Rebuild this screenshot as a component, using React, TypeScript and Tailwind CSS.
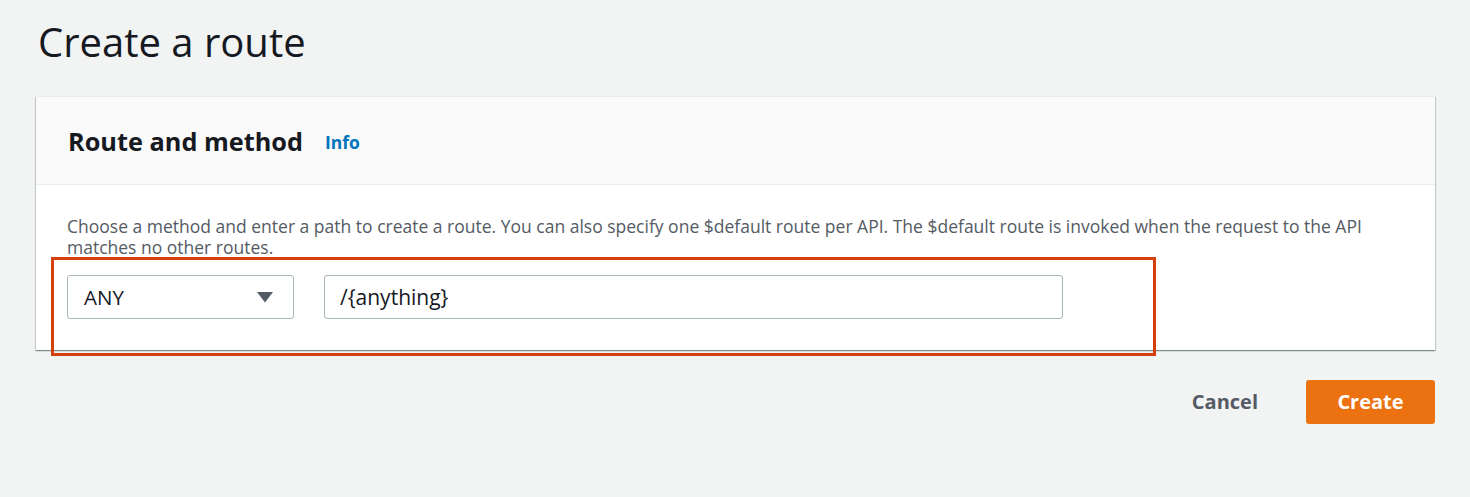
export default function App() {
  return (
    <div className="min-h-screen bg-[#f2f3f3] pl-[36px] pr-[35px] pt-[14px] font-['Open_Sans',sans-serif] text-[#16191f]">
      <h1 className="ml-[2px] text-[40px] leading-[56px] font-normal">Create a route</h1>

      <div className="mt-[26px] bg-white shadow-[0_1px_1px_0_rgba(0,28,36,0.3),1px_1px_1px_0_rgba(0,28,36,0.15),-1px_1px_1px_0_rgba(0,28,36,0.15)] border-t border-[#eaeded]">
        <div className="flex h-[88px] items-center gap-[22px] border-b border-[#eaeded] bg-[#fafafa] pl-[32px] pr-[31px]">
          <h2 className="text-[25.3px] font-bold leading-[30px]">Route and method</h2>
          <a href="#" className="mt-[3px] text-[17.5px] font-bold text-[#0073bb]">
            Info
          </a>
        </div>

        <div className="px-[31px] pt-[31px] pb-[31px]">
          <p className="text-[17.5px] leading-[21px] text-[#545b64]">
            Choose a method and enter a path to create a route. You can also specify one $default route per API. The
            $default route is invoked when the request to the API matches no other routes.
          </p>

          <div className="relative mt-[17px] flex items-center gap-[30px]">
            <button
              type="button"
              className="flex h-[44px] w-[227px] items-center justify-between rounded-[3px] border border-[#aab7b8] bg-white pl-[16px] pr-[20px] text-[20.5px]"
            >
              <span>ANY</span>
              <svg width="16" height="11" viewBox="0 0 16 11">
                <path d="M0 0h16L8 10.5z" fill="#545b64" />
              </svg>
            </button>
            <input
              readOnly
              value="/{anything}"
              className="h-[44px] w-[739px] rounded-[3px] border border-[#aab7b8] bg-white px-[15px] text-[21px] text-[#16191f] outline-none"
            />
            <div className="pointer-events-none absolute left-[-16px] top-[-18px] h-[99px] w-[1105px] border-[3px] border-[#d4410f]" />
          </div>
        </div>
      </div>

      <div className="mt-[30px] flex items-center justify-end gap-[48px]">
        <button type="button" className="text-[20px] font-bold text-[#545b64]">
          Cancel
        </button>
        <button
          type="button"
          className="h-[44px] w-[129px] rounded-[3px] bg-[#ec7211] text-[20px] font-bold text-white"
        >
          Create
        </button>
      </div>
    </div>
  );
}
